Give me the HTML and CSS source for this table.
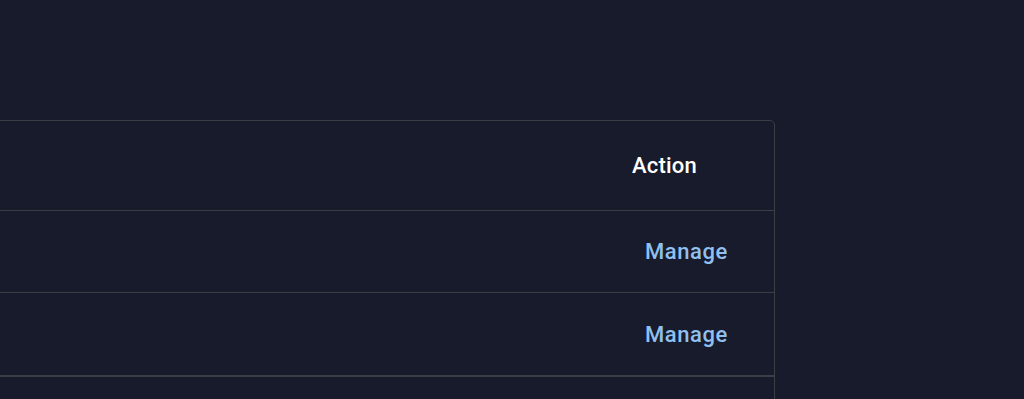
FILE: index.html
```html
<!DOCTYPE html>
<html lang="en">
<head>
<meta charset="utf-8">
<title>Table</title>
<link rel="stylesheet" href="styles.css">
</head>
<body>
<div class="page">
  <div class="card">
    <div class="row head">
      <div class="cell-action"><span class="th">Action</span></div>
    </div>
    <div class="row first">
      <div class="cell-btn"><button class="btn">Manage</button></div>
    </div>
    <div class="row last">
      <div class="cell-btn"><button class="btn">Manage</button></div>
    </div>
    <div class="row tail"></div>
  </div>
</div>
</body>
</html>
```
FILE: styles.css
```css
html, body {
  margin: 0;
  padding: 0;
  background: #181b2b;
  height: 100%;
  overflow: hidden;
}
body {
  font-family: Roboto, "Liberation Sans", sans-serif;
}
.page {
  padding-top: 120px;
}
.card {
  margin-left: -40px;
  width: 815px;
  border: 1px solid #3d3e45;
  border-radius: 5px;
  box-sizing: border-box;
}
.row {
  display: flex;
  justify-content: flex-end;
  align-items: center;
  height: 82px;
  border-bottom: 1px solid #3d3e45;
}
.row.head {
  height: 89px;
}
.row.first {
  height: 81px;
}
.row.last {
  border-bottom: 2px solid #3d3e45;
}
.row.tail {
  border-bottom: none;
  height: 60px;
}
.cell-action {
  padding-right: 77px;
}
.th {
  color: #ffffff;
  font-size: 22px;
  font-weight: 500;
  letter-spacing: 0.2px;
}
.cell-btn {
  padding-right: 46px;
}
.btn {
  background: none;
  border: none;
  padding: 0;
  color: #90c0f0;
  font-family: Roboto, "Liberation Sans", sans-serif;
  font-size: 22px;
  font-weight: 500;
  letter-spacing: 0.6px;
  cursor: pointer;
}
```
